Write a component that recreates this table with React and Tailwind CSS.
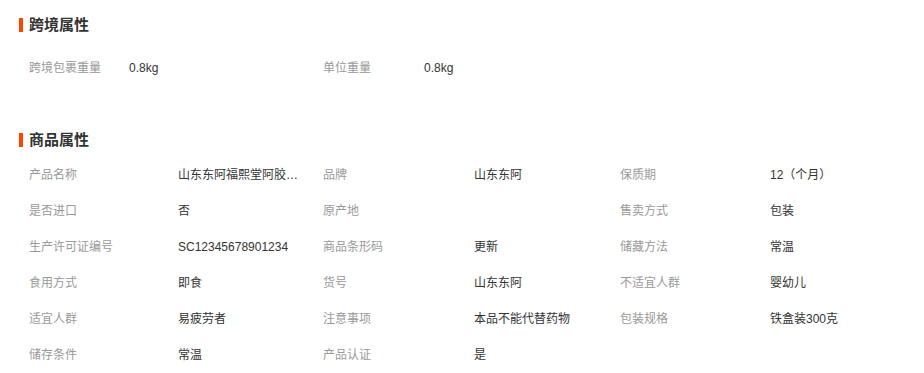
import React from 'react';

const crossBorder = [
  ['跨境包裹重量', '0.8kg'],
  ['单位重量', '0.8kg'],
];

const productAttrs = [
  ['产品名称', '山东东阿福熙堂阿胶糕礼盒装'],
  ['品牌', '山东东阿'],
  ['保质期', '12（个月）'],
  ['是否进口', '否'],
  ['原产地', ''],
  ['售卖方式', '包装'],
  ['生产许可证编号', 'SC12345678901234'],
  ['商品条形码', '更新'],
  ['储藏方法', '常温'],
  ['食用方式', '即食'],
  ['货号', '山东东阿'],
  ['不适宜人群', '婴幼儿'],
  ['适宜人群', '易疲劳者'],
  ['注意事项', '本品不能代替药物'],
  ['包装规格', '铁盒装300克'],
  ['储存条件', '常温'],
  ['产品认证', '是'],
];

const SectionTitle = ({ children }) => (
  <div className="flex items-center h-5 pl-[19px]">
    <span className="w-1 h-[14px] bg-[#ff4400] mr-[6px]"></span>
    <h3 className="text-[15px] font-bold text-[#333]">{children}</h3>
  </div>
);

export default function App() {
  return (
    <div
      className="w-[924px] h-[373px] bg-white pt-[15px] text-[12px] overflow-hidden"
      style={{ fontFamily: '"Liberation Sans", "Noto Sans CJK SC", sans-serif' }}
    >
      {/* 跨境属性 */}
      <SectionTitle>跨境属性</SectionTitle>
      <div className="mt-[15px] pl-[29px] grid grid-cols-[100px_194px_101px_1fr]">
        {crossBorder.map(([label, value]) => (
          <React.Fragment key={label}>
            <div className="h-9 flex items-center text-[#999]">{label}</div>
            <div className="h-9 flex items-center text-[#333]">{value}</div>
          </React.Fragment>
        ))}
      </div>

      {/* 商品属性 */}
      <div className="mt-[44px]">
        <SectionTitle>商品属性</SectionTitle>
      </div>
      <div className="mt-[7px] pl-[29px] grid grid-cols-[149px_145px_151px_146px_150px_1fr]">
        {productAttrs.map(([label, value]) => (
          <React.Fragment key={label}>
            <div className="h-9 flex items-center text-[#999]">{label}</div>
            <div className="h-9 flex items-center text-[#333] min-w-0">
              <span className="block max-w-[126px] truncate">{value}</span>
            </div>
          </React.Fragment>
        ))}
      </div>
    </div>
  );
}
